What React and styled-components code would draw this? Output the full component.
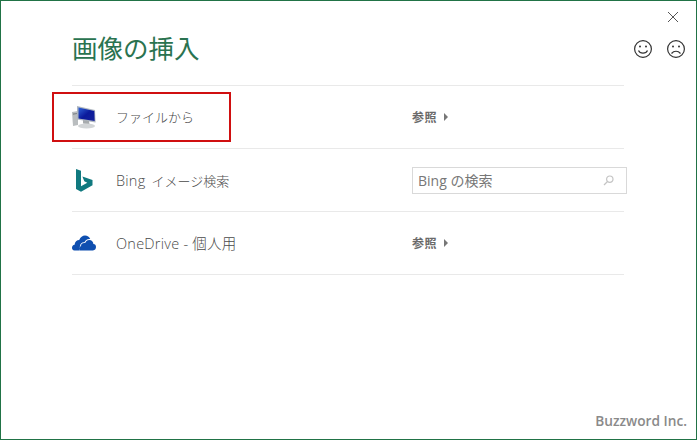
import React from 'react';
import styled, { createGlobalStyle } from 'styled-components';

const Global = createGlobalStyle`
  html, body {
    margin: 0;
    padding: 0;
    background: #fff;
  }
  body {
    font-family: "Noto Sans CJK JP", "Noto Sans", sans-serif;
  }
`;

const Dialog = styled.div`
  position: relative;
  box-sizing: border-box;
  width: 697px;
  height: 440px;
  border: 1px solid #217346;
  background: #fff;
  padding: 0 72px 0 71px;
  overflow: hidden;
`;

const Close = styled.button`
  position: absolute;
  top: 10px;
  right: 17px;
  width: 12px;
  height: 12px;
  padding: 0;
  border: 0;
  background: none;
  display: flex;
`;

const Feedback = styled.div`
  position: absolute;
  top: 38px;
  right: 10px;
  display: flex;
  gap: 13px;
`;

const Title = styled.h1`
  margin: 0;
  height: 84px;
  padding-top: 28px;
  box-sizing: border-box;
  font-size: 25.5px;
  line-height: 36px;
  font-weight: 400;
  color: #2a7350;
`;

const List = styled.div`
  border-top: 1px solid #e9e9e9;
`;

const Row = styled.div`
  height: 63px;
  box-sizing: border-box;
  border-bottom: 1px solid #e9e9e9;
  display: grid;
  grid-template-columns: 340px 1fr;
  align-items: center;
`;

const Source = styled.div`
  display: flex;
  align-items: center;
`;

const IconSlot = styled.div`
  width: 44px;
  height: 30px;
  flex: none;
  display: flex;
  align-items: center;
  padding-left: ${(p) => p.$inset || 0}px;
  box-sizing: border-box;
`;

const Label = styled.span`
  font-family: "Open Sans", "Noto Sans CJK JP", sans-serif;
  font-size: 14.5px;
  font-weight: 300;
  line-height: 20px;
  letter-spacing: 0.25px;
  color: #4a4a4a;
  position: relative;
  top: ${(p) => p.$drop || 0}px;
`;

const Kana = styled.span`
  font-size: 13px;
  letter-spacing: 0;
  margin-left: ${(p) => p.$lead || 0}px;
`;

const Browse = styled.div`
  display: flex;
  align-items: center;
  gap: 7px;
  font-size: 12px;
  font-weight: 700;
  line-height: 16px;
  letter-spacing: 0.4px;
  color: #6a6a6a;
`;

const Arrow = styled.span`
  width: 0;
  height: 0;
  border-left: 4px solid #777;
  border-top: 4px solid transparent;
  border-bottom: 4px solid transparent;
`;

const Search = styled.div`
  width: 215px;
  height: 27px;
  box-sizing: border-box;
  border: 1px solid #d9d9d9;
  padding: 0 12px 0 5px;
  display: flex;
  align-items: center;
  justify-content: space-between;
  font-family: "Open Sans", "Noto Sans CJK JP", sans-serif;
  font-size: 14px;
  color: #777;
`;

const Highlight = styled.div`
  position: absolute;
  left: 51px;
  top: 91px;
  width: 179px;
  height: 50px;
  box-sizing: border-box;
  border: 2px solid #d00f10;
`;

const Watermark = styled.div`
  position: absolute;
  right: 9px;
  bottom: 9px;
  font-family: "Open Sans", sans-serif;
  font-size: 13.7px;
  font-weight: 600;
  line-height: 18px;
  color: #8a8a8a;
`;

const CloseIcon = () => (
  <svg width="12" height="12" viewBox="0 0 12 12" fill="none" stroke="#555" strokeWidth="1">
    <path d="M1 1l10 10M11 1L1 11" />
  </svg>
);

const Face = ({ sad }) => (
  <svg width="20" height="20" viewBox="0 0 20 20" fill="none" stroke="#333" strokeWidth="1.2">
    <circle cx="10" cy="10" r="8.4" />
    <circle cx="7" cy="7.5" r="1" fill="#333" stroke="none" />
    <circle cx="13" cy="7.5" r="1" fill="#333" stroke="none" />
    <path d={sad ? 'M5.5 14.5c2.5-3 6.5-3 9 0' : 'M5.5 11.5c1.5 3.6 7.5 3.6 9 0'} />
  </svg>
);

const ComputerIcon = () => (
  <svg width="25" height="23" viewBox="0 0 25 23">
    <defs>
      <linearGradient id="screen" x1="0" y1="0" x2="1" y2="1">
        <stop offset="0" stopColor="#2f63d8" />
        <stop offset="0.5" stopColor="#0b1a9c" />
        <stop offset="1" stopColor="#16229a" />
      </linearGradient>
    </defs>
    <path d="M0 6l6-1v14l-5 1z" fill="#b9bdbf" />
    <path d="M1 7.500l4-.6v1.200l-4 .6z" fill="#7e8387" />
    <path d="M5 0l18 4 .6 12.500L5 13.500z" fill="#aeb6c0" />
    <path d="M6.500 1.500l15.800 3.600.4 10L6.500 12.500z" fill="url(#screen)" />
    <path d="M11 14l6 1 .5 3.500-6.500-1z" fill="#a7abae" />
    <ellipse cx="14.500" cy="20" rx="8.500" ry="2.400" fill="#d2d5d7" />
  </svg>
);

const BingIcon = () => (
  <svg width="17" height="23" viewBox="0 0 17 23">
    <path d="M0 0l5 1.700v15.600l6.300-3.600-3-1.400-1.900-4.700 10.100 3.500v5.200L5 22.800 0 20z" fill="#10797f" />
  </svg>
);

const CloudIcon = () => (
  <svg width="25" height="16" viewBox="0 0 25 16">
    <path
      d="M2.500 15.500C.6 15.500 0 13.800 0 12.700c0-1.600 1-2.800 2.600-3 .2-3 2.300-4.700 4.600-4.700C8.500 2 10.500 .5 13 .5c2.500 0 4.300 1.300 5.200 3.500-3.100-.3-5 1.300-5.700 3.300-2.700-.2-4.700 1.600-4.400 4.200-1.100.5-1.300 2.400-.3 4z"
      fill="#0f4fb0"
    />
    <path
      d="M9 15.500c-1.300 0-2-1-2-2.100 0-1.200 .8-2 2-2.100-.1-2.300 1.600-3.500 4.200-3.200.7-2 2.200-3 4.100-3 2.500 0 4 1.700 4.100 4 1.600 0 2.600 1.200 2.600 3 0 1.800-1.200 3.400-3 3.400z"
      fill="#0f4fb0"
    />
  </svg>
);

const SearchIcon = () => (
  <svg width="11" height="11" viewBox="0 0 11 11" fill="none" stroke="#c4c4c4" strokeWidth="1.2">
    <circle cx="6.800" cy="4.200" r="3.200" />
    <path d="M4.500 6.500L1 10" />
  </svg>
);

const BrowseLink = () => (
  <Browse>
    参照
    <Arrow />
  </Browse>
);

export default function App() {
  return (
    <Dialog>
      <Global />
      <Close aria-label="閉じる">
        <CloseIcon />
      </Close>
      <Feedback>
        <Face />
        <Face sad />
      </Feedback>
      <Title>画像の挿入</Title>
      <List>
        <Row>
          <Source>
            <IconSlot>
              <ComputerIcon />
            </IconSlot>
            <Label>
              <Kana>ファイルから</Kana>
            </Label>
          </Source>
          <BrowseLink />
        </Row>
        <Row>
          <Source>
            <IconSlot $inset={4}>
              <BingIcon />
            </IconSlot>
            <Label $drop={1}>
              Bing <Kana $lead={2}>イメージ検索</Kana>
            </Label>
          </Source>
          <Search>
            Bing の検索
            <SearchIcon />
          </Search>
        </Row>
        <Row>
          <Source>
            <IconSlot>
              <CloudIcon />
            </IconSlot>
            <Label $drop={1}>OneDrive - 個人用</Label>
          </Source>
          <BrowseLink />
        </Row>
      </List>
      <Highlight />
      <Watermark>Buzzword Inc.</Watermark>
    </Dialog>
  );
}
